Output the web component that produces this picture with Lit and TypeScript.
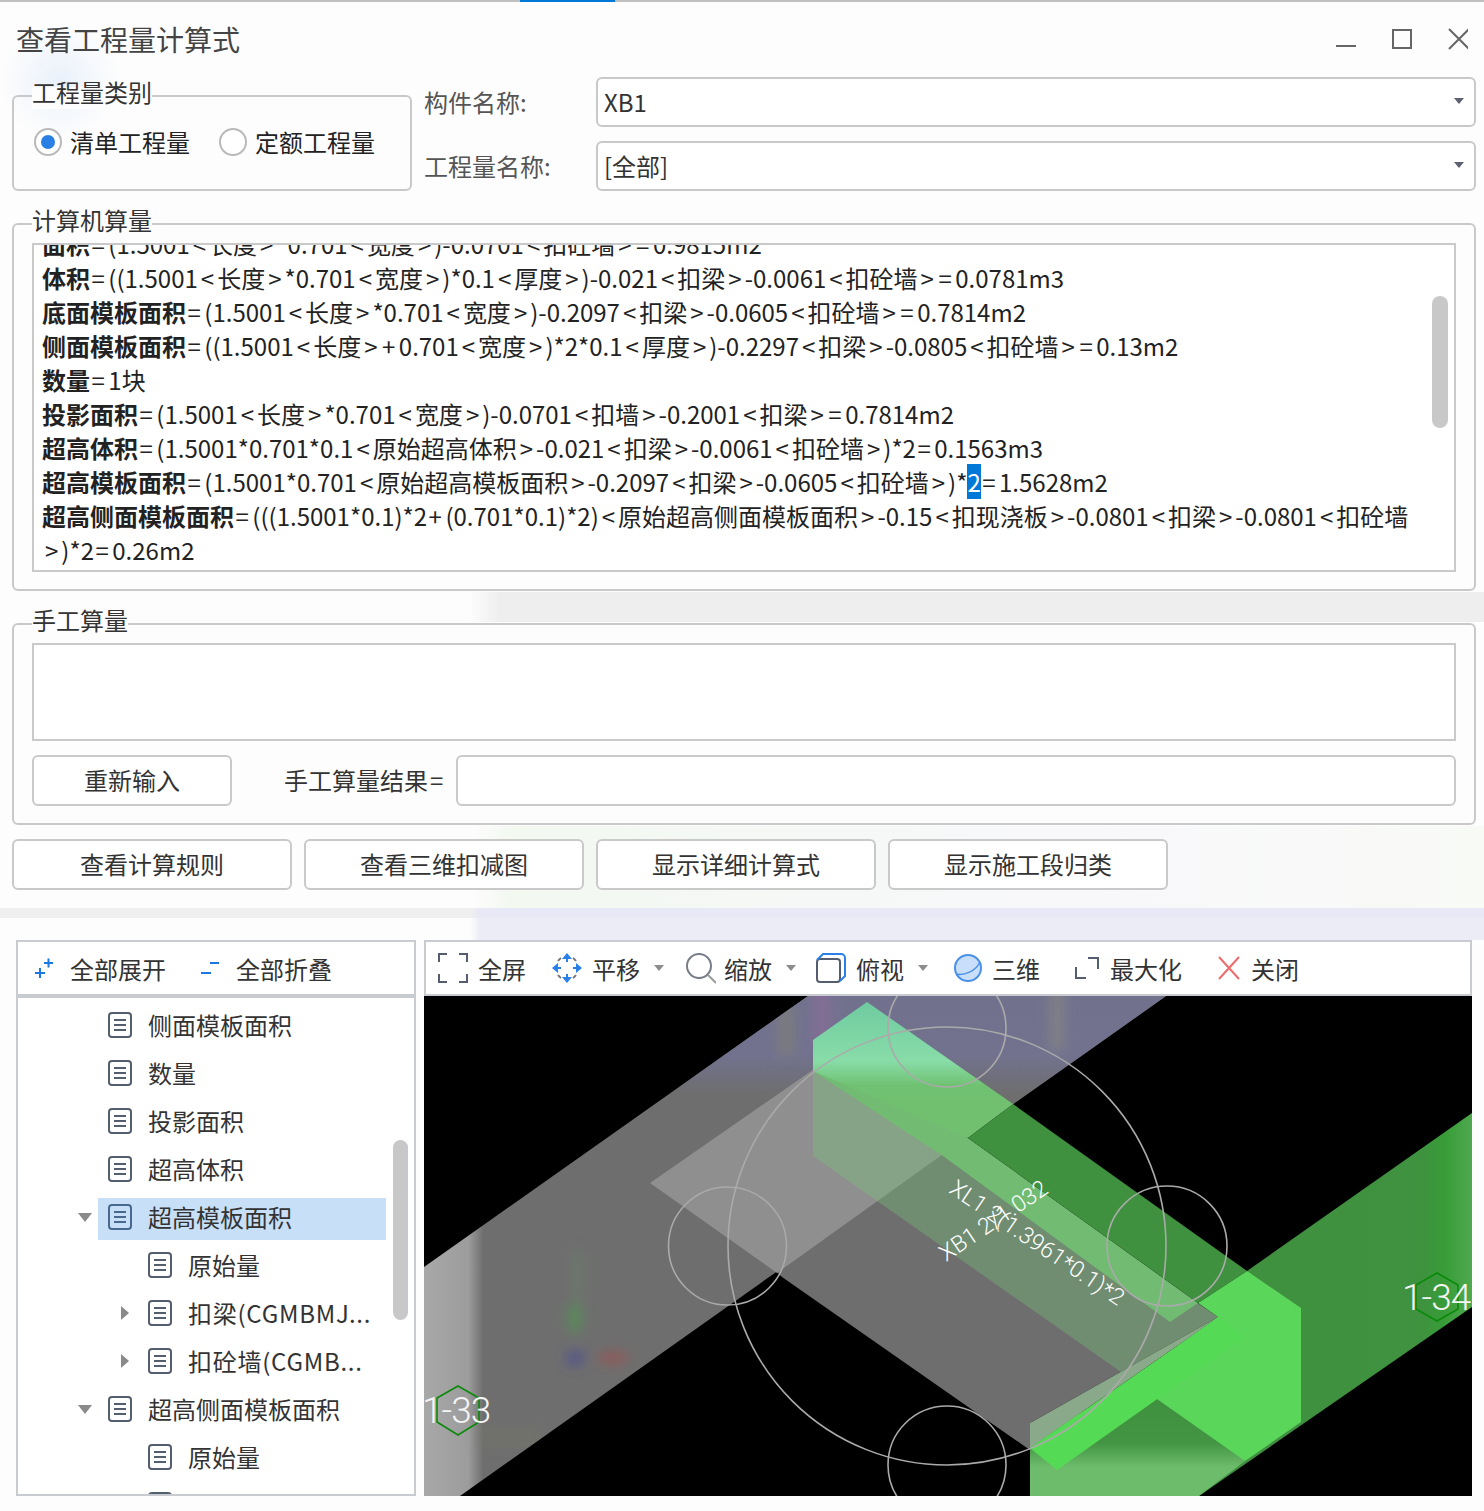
import { LitElement, html, svg, css } from 'lit';
import { customElement } from 'lit/decorators.js';

type TreeRow = {
  text: string;
  level: 1 | 2;
  arrow?: 'down' | 'right';
  selected?: boolean;
  latin?: boolean;
};

const CODE_LINES: [string, string][] = [
  ['面积', '=(1.5001<长度>*0.701<宽度>)-0.0701<扣砼墙>=0.9815m2'],
  ['体积', '=((1.5001<长度>*0.701<宽度>)*0.1<厚度>)-0.021<扣梁>-0.0061<扣砼墙>=0.0781m3'],
  ['底面模板面积', '=(1.5001<长度>*0.701<宽度>)-0.2097<扣梁>-0.0605<扣砼墙>=0.7814m2'],
  ['侧面模板面积', '=((1.5001<长度>+0.701<宽度>)*2*0.1<厚度>)-0.2297<扣梁>-0.0805<扣砼墙>=0.13m2'],
  ['数量', '=1块'],
  ['投影面积', '=(1.5001<长度>*0.701<宽度>)-0.0701<扣墙>-0.2001<扣梁>=0.7814m2'],
  ['超高体积', '=(1.5001*0.701*0.1<原始超高体积>-0.021<扣梁>-0.0061<扣砼墙>)*2=0.1563m3'],
];

const TREE_ROWS: TreeRow[] = [
  { text: '侧面模板面积', level: 1 },
  { text: '数量', level: 1 },
  { text: '投影面积', level: 1 },
  { text: '超高体积', level: 1 },
  { text: '超高模板面积', level: 1, arrow: 'down', selected: true },
  { text: '原始量', level: 2 },
  { text: '扣梁(CGMBMJ...', level: 2, arrow: 'right', latin: true },
  { text: '扣砼墙(CGMB...', level: 2, arrow: 'right', latin: true },
  { text: '超高侧面模板面积', level: 1, arrow: 'down' },
  { text: '原始量', level: 2 },
  { text: '', level: 2 },
];

// wraps brackets and operators so they get the wide spacing of the original font
function expr(text: string) {
  return text.split(/([<>=+])/).map((part) => {
    if (part === '<' || part === '>') return html`<span class="ang">${part}</span>`;
    if (part === '=' || part === '+') return html`<span class="eq">${part}</span>`;
    return part;
  });
}

const docIcon = html`<svg class="doc" width="24" height="26" viewBox="0 0 24 26">
  <rect x="1" y="1" width="22" height="24" rx="3" fill="none" stroke="currentColor" stroke-width="2"></rect>
  <path d="M6 8h12M6 13h12M6 18h12" stroke="currentColor" stroke-width="2"></path>
</svg>`;

const caret = html`<span class="caret"></span>`;

// the 3D view, drawn in page coordinates so the values read off the screenshot stay usable
const sceneShapes = svg`
  <defs>
    <linearGradient id="beamLeft" gradientUnits="userSpaceOnUse" x1="424" y1="0" x2="1166" y2="0">
      <stop offset="0" stop-color="#a8a8a8"></stop>
      <stop offset="0.06" stop-color="#9c9c9c"></stop>
      <stop offset="0.08" stop-color="#6e6e6e"></stop>
      <stop offset="1" stop-color="#6e6e6e"></stop>
    </linearGradient>
    <linearGradient id="beamTop" gradientUnits="userSpaceOnUse" x1="0" y1="996" x2="0" y2="1095">
      <stop offset="0" stop-color="#71718e"></stop>
      <stop offset="0.6" stop-color="#72728f"></stop>
      <stop offset="1" stop-color="#71718e" stop-opacity="0"></stop>
    </linearGradient>
    <linearGradient id="topFace" gradientUnits="userSpaceOnUse" x1="0" y1="1002" x2="0" y2="1100">
      <stop offset="0" stop-color="#6fcba0"></stop>
      <stop offset="0.6" stop-color="#88dca8"></stop>
      <stop offset="0.85" stop-color="#70c272"></stop>
      <stop offset="1" stop-color="#70c070"></stop>
    </linearGradient>
    <linearGradient id="rightBeam" gradientUnits="userSpaceOnUse" x1="1240" y1="0" x2="1472" y2="0">
      <stop offset="0" stop-color="#3f903f"></stop>
      <stop offset="0.78" stop-color="#3f923f"></stop>
      <stop offset="0.88" stop-color="#379c37"></stop>
      <stop offset="1" stop-color="#4fa94f"></stop>
    </linearGradient>
    <linearGradient id="lowerFace" gradientUnits="userSpaceOnUse" x1="0" y1="1400" x2="0" y2="1496">
      <stop offset="0" stop-color="#3f903f"></stop>
      <stop offset="0.45" stop-color="#439443"></stop>
      <stop offset="0.7" stop-color="#6cbc6c"></stop>
      <stop offset="1" stop-color="#6cbc6c"></stop>
    </linearGradient>
    <filter id="soft" x="-50%" y="-50%" width="200%" height="200%">
      <feGaussianBlur stdDeviation="6"></feGaussianBlur>
    </filter>
    <clipPath id="beamClip">
      <polygon points="424,1267 808,996 1166,996 460,1496 424,1496"></polygon>
    </clipPath>
  </defs>
  <rect x="424" y="996" width="1048" height="500" fill="#000"></rect>
  <polygon points="424,1267 808,996 1166,996 460,1496 424,1496" fill="url(#beamLeft)"></polygon>
  <polygon points="424,1267 808,996 1166,996 460,1496 424,1496" fill="url(#beamTop)"></polygon>
  <g clip-path="url(#beamClip)">
    <g filter="url(#soft)" fill-opacity="0.6">
      <rect x="812" y="985" width="20" height="60" fill="#8c6c98"></rect>
      <rect x="778" y="1005" width="16" height="50" fill="#828274"></rect>
      <rect x="1050" y="985" width="14" height="65" fill="#8a8a80"></rect>
      <rect x="572" y="1250" width="12" height="50" fill="#6c7c6c"></rect>
      <ellipse cx="575" cy="1318" rx="8" ry="16" fill="#4f9a4f"></ellipse>
      <rect x="566" y="1350" width="18" height="16" fill="#4c4c96"></rect>
      <ellipse cx="613" cy="1358" rx="16" ry="7" fill="#a05050"></ellipse>
      <rect x="480" y="1430" width="60" height="16" fill="#74746a"></rect>
    </g>
  </g>
  <polygon points="782,1277 1030,1450 1030,1423 1218,1317 900,1100 700,1200" fill="#6e6e6e"></polygon>
  <polygon points="650,1183 840,1051 1013,1104 777,1273" fill="#8f8f8f"></polygon>
  <polygon points="813,1040 813,1156 1121,1372 1218,1317" fill="#78c878" fill-opacity="0.35"></polygon>
  <polygon points="813,1042 968,1138 1198,1303 1170,1322 943,1156 813,1071" fill="#72bb72"></polygon>
  <polygon points="867,1002 813,1040 813,1071 968,1138 1013,1104" fill="url(#topFace)"></polygon>
  <polygon points="1013,1104 968,1138 1198,1303 1247,1271" fill="#3f903f"></polygon>
  <polygon points="1472,1113 1247,1271 1199,1496 1472,1307" fill="url(#rightBeam)"></polygon>
  <polygon points="1030,1440 1160,1370 1245,1461 1199,1496 1030,1496" fill="url(#lowerFace)"></polygon>
  <polygon points="1247,1271 1301,1308 1301,1422 1245,1461 1130,1380 1218,1317 1198,1303" fill="#5ad65a"></polygon>
  <polygon points="1030,1423 1218,1317 1190,1337 1030,1448" fill="#8aa88a"></polygon>
  <polygon points="1030,1448 1190,1337 1218,1317 1245,1337 1057,1470" fill="#55da55"></polygon>
  <g fill="none" stroke="#aaa" stroke-width="1.6">
    <circle cx="947" cy="1246" r="219"></circle>
    <circle cx="727.5" cy="1246" r="59"></circle>
    <circle cx="947" cy="1028" r="59"></circle>
    <circle cx="1167" cy="1246" r="60"></circle>
    <circle cx="947" cy="1465" r="59"></circle>
  </g>
  <g class="dim">
    <text transform="translate(948 1192) rotate(34)">XL1 2(1.3961*0.1)*2</text>
    <text transform="translate(946 1262) rotate(-34)">XB1 2/1.032</text>
  </g>
  <g fill="none" stroke="#0a8a0a" stroke-width="1.6">
    <polygon points="458,1386 479,1398 479,1422 458,1435 437,1422 437,1398"></polygon>
    <polygon points="1437,1273 1458,1285 1458,1309 1437,1321 1416,1309 1416,1285"></polygon>
  </g>
  <text class="axis" x="422" y="1423">1-33</text>
  <text class="axis" x="1402" y="1310">1-34</text>
`;

@customElement('app-root')
export class AppRoot extends LitElement {
  static styles = css`
    :host {
      display: block;
      width: 1484px;
      height: 1511px;
      overflow: hidden;
      font-family: "Noto Sans CJK SC", "Liberation Sans", sans-serif;
      font-size: 24px;
      color: #333;
      background-color: #fdfdfd;
      background-repeat: no-repeat;
      background-image:
        linear-gradient(90deg, rgba(240,240,240,0), #eeeeee 30px),
        linear-gradient(90deg, rgba(240,248,236,0), #f3f8f1 40px, #f8f8fb 60%, #f8faf6),
        radial-gradient(ellipse at center, rgba(226,236,250,0.7), rgba(226,236,250,0) 70%);
      background-size: 1014px 30px, 1014px 82px, 120px 120px;
      background-position: 470px 592px, 470px 826px, 0 20px;
    }

    .topline {
      height: 2px;
      background: #c0c0c0;
    }
    .topline div {
      width: 95px;
      height: 2px;
      margin-left: 520px;
      background: #0078d7;
    }

    .titlebar {
      height: 75px;
      padding: 0 16px;
      display: flex;
      align-items: center;
      justify-content: space-between;
    }
    .titlebar h1 {
      margin: -1px 0 0;
      font-size: 28px;
      font-weight: 400;
      line-height: 76px;
      color: #444;
    }
    .titlebar svg {
      display: block;
      margin-top: -2px;
    }

    .top {
      display: flex;
      height: 114px;
      margin: 0 8px 0 12px;
    }
    .group {
      position: relative;
      box-sizing: border-box;
      border: 2px solid #c9c9c9;
      border-radius: 6px;
    }
    .legend {
      position: absolute;
      left: 18px;
      top: -22px;
      line-height: 34px;
      background: linear-gradient(transparent 12px, #fdfdfd 12px);
      white-space: nowrap;
    }

    .kind {
      width: 400px;
      height: 96px;
      margin-top: 18px;
      padding: 31px 0 0 20px;
      display: flex;
      align-items: flex-start;
    }
    .radio {
      display: flex;
      align-items: center;
      line-height: 28px;
      margin-right: 29px;
      color: #222;
    }
    .dot {
      box-sizing: border-box;
      width: 28px;
      height: 28px;
      margin-right: 8px;
      border: 2px solid #b9b9b9;
      border-radius: 50%;
      display: flex;
      align-items: center;
      justify-content: center;
      background: #fff;
    }
    .dot.on::after {
      content: "";
      width: 14px;
      height: 14px;
      border-radius: 50%;
      background: #2a7fe4;
    }

    .fields {
      flex: 1;
      margin-left: 12px;
      display: flex;
      flex-direction: column;
      gap: 14px;
    }
    .field {
      display: flex;
      align-items: center;
      height: 50px;
    }
    .field label {
      width: 172px;
      padding-bottom: 2px;
      color: #555;
    }
    .select {
      box-sizing: border-box;
      flex: 1;
      height: 50px;
      padding: 0 10px 2px 6px;
      border: 2px solid #c9c9c9;
      border-radius: 6px;
      display: flex;
      align-items: center;
      justify-content: space-between;
      background: #fff;
    }
    .select i {
      width: 0;
      height: 0;
      border-left: 5px solid transparent;
      border-right: 5px solid transparent;
      border-top: 6px solid #5c6070;
    }

    .computed {
      height: 368px;
      margin: 32px 8px 0 12px;
      padding: 18px 18px 17px;
    }
    .code {
      position: relative;
      box-sizing: border-box;
      height: 329px;
      padding-left: 8px;
      border: 2px solid #c9c9c9;
      overflow: hidden;
      background: #fff;
      color: #222;
      line-height: 34px;
    }
    .lines {
      margin-top: -18px;
    }
    .line {
      white-space: nowrap;
    }
    .line b {
      font-weight: 700;
    }
    .ang {
      margin: 0 3px;
    }
    .eq {
      margin: 0 3.500px 0 1.500px;
    }
    .sel {
      background: #0078d7;
      color: #fff;
    }
    .code .thumb {
      position: absolute;
      right: 6px;
      top: 51px;
      width: 16px;
      height: 132px;
      border-radius: 8px;
      background: #c8c8c8;
    }

    .manual {
      height: 202px;
      margin: 32px 8px 0 12px;
      padding: 18px 18px 0;
    }
    .memo {
      box-sizing: border-box;
      height: 98px;
      border: 2px solid #c9c9c9;
      background: #fff;
    }
    .manual-row {
      display: flex;
      align-items: center;
      margin-top: 14px;
    }
    .manual-row .btn {
      width: 200px;
      margin-right: 52px;
    }
    .manual-row span.label {
      width: 172px;
      padding-bottom: 2px;
      white-space: nowrap;
    }
    .manual-row .eq {
      margin: 0 0 0 2px;
    }
    .result {
      box-sizing: border-box;
      flex: 1;
      height: 51px;
      border: 2px solid #c9c9c9;
      border-radius: 6px;
      background: #fff;
    }
    .btn {
      box-sizing: border-box;
      height: 51px;
      padding-bottom: 2px;
      border: 2px solid #c9c9c9;
      border-radius: 6px;
      display: flex;
      align-items: center;
      justify-content: center;
      background: #fff;
      white-space: nowrap;
    }
    .actions {
      display: flex;
      gap: 12px;
      margin: 14px 0 0 12px;
    }
    .actions .btn {
      width: 280px;
    }

    .splitter {
      height: 10px;
      margin-top: 18px;
      background: linear-gradient(90deg, #efefef 470px, #e8e8f6 480px);
    }

    .lower {
      display: flex;
      gap: 8px;
      height: 556px;
      padding: 22px 12px 0 16px;
      background: linear-gradient(90deg, #fdfdfd 470px, #ececf7 480px) 0 0 / 100% 22px no-repeat;
    }
    .tree {
      box-sizing: border-box;
      position: relative;
      width: 400px;
      border: 2px solid #c8ccd0;
      background: #fff;
      overflow: hidden;
    }
    .tree-head {
      box-sizing: border-box;
      height: 56px;
      padding-left: 16px;
      border-bottom: 4px solid #c8ccd0;
      display: flex;
      align-items: center;
    }
    .tree-head svg {
      display: block;
      margin-right: 16px;
    }
    .tree-head span {
      margin-right: 34px;
    }
    .tree-body {
      padding-top: 5px;
    }
    .item {
      display: flex;
      align-items: center;
      height: 48px;
      padding-left: 58px;
    }
    .slot {
      width: 18px;
      margin-right: 4px;
      margin-bottom: 3px;
      display: flex;
      justify-content: center;
      flex: none;
    }
    .row {
      width: 288px;
      height: 42px;
      padding: 0 0 4px 10px;
      box-sizing: border-box;
      display: flex;
      align-items: center;
      color: #555e6e;
      flex: none;
    }
    .row.l2 {
      padding-left: 18px;
    }
    .row .slot {
      margin-right: 14px;
      margin-bottom: 0;
    }
    .row.sel-row {
      background: #c8dff8;
      color: #48688e;
    }
    .row span {
      margin: 0 0 0 16px;
      padding-bottom: 2px;
      color: #333;
      white-space: nowrap;
    }
    .row span.latin {
      letter-spacing: 0.750px;
    }
    .doc {
      display: block;
      flex: none;
    }
    .down {
      width: 0;
      height: 0;
      border-left: 7px solid transparent;
      border-right: 7px solid transparent;
      border-top: 9px solid #8a8a8a;
    }
    .right {
      width: 0;
      height: 0;
      border-top: 7px solid transparent;
      border-bottom: 7px solid transparent;
      border-left: 8px solid #8a8a8a;
    }
    .tree .thumb {
      position: absolute;
      left: 375px;
      top: 198px;
      width: 15px;
      height: 180px;
      border-radius: 8px;
      background: #c8c8c8;
    }

    .viewer {
      width: 1048px;
      display: flex;
      flex-direction: column;
    }
    .toolbar {
      box-sizing: border-box;
      height: 56px;
      border: 2px solid #c8ccd0;
      background: #fff;
      display: flex;
      align-items: center;
      padding-left: 12px;
    }
    .tool {
      display: flex;
      align-items: center;
      white-space: nowrap;
    }
    .tool svg {
      display: block;
      margin-right: 10px;
    }
    .tool.full { width: 114px; }
    .tool.pan { width: 134px; }
    .tool.zoom { width: 130px; }
    .tool.zoom svg { margin-right: 8px; }
    .tool.view { width: 138px; }
    .tool.three { width: 120px; }
    .tool.max { width: 143px; }
    .caret {
      width: 0;
      height: 0;
      margin-left: 14px;
      border-left: 5px solid transparent;
      border-right: 5px solid transparent;
      border-top: 6px solid #8c8c8c;
    }
    .scene {
      display: block;
      width: 1048px;
      height: 500px;
    }
    .scene .dim text {
      font: 300 23px Roboto, "Liberation Sans", sans-serif;
      fill: #fff;
    }
    .scene .axis {
      font: 300 37px Roboto, "Liberation Sans", sans-serif;
      letter-spacing: -1px;
      fill: #f4f4f4;
    }
  `;

  private renderTitlebar() {
    return html`
      <div class="titlebar">
        <h1>查看工程量计算式</h1>
        <svg width="136" height="24" viewBox="0 0 136 24">
          <path d="M4 19h20" stroke="#666" stroke-width="2"></path>
          <rect x="61" y="3" width="18" height="18" fill="none" stroke="#666" stroke-width="2"></rect>
          <path d="M117 2l20 20M137 2l-20 20" stroke="#666" stroke-width="2" fill="none"></path>
        </svg>
      </div>
    `;
  }

  private renderTop() {
    return html`
      <div class="top">
        <div class="group kind">
          <div class="legend">工程量类别</div>
          <div class="radio"><div class="dot on"></div>清单工程量</div>
          <div class="radio"><div class="dot"></div>定额工程量</div>
        </div>
        <div class="fields">
          <div class="field">
            <label>构件名称:</label>
            <div class="select">XB1<i></i></div>
          </div>
          <div class="field">
            <label>工程量名称:</label>
            <div class="select">[全部]<i></i></div>
          </div>
        </div>
      </div>
    `;
  }

  private renderComputed() {
    return html`
      <div class="group computed">
        <div class="legend">计算机算量</div>
        <div class="code">
          <div class="lines">
            ${CODE_LINES.map(([label, rest]) => html`<div class="line"><b>${label}</b>${expr(rest)}</div>`)}
            <div class="line">
              <b>超高模板面积</b>${expr('=(1.5001*0.701<原始超高模板面积>-0.2097<扣梁>-0.0605<扣砼墙>)*')}<span class="sel">2</span>${expr('=1.5628m2')}
            </div>
            <div class="line">
              <b>超高侧面模板面积</b>${expr('=(((1.5001*0.1)*2+(0.701*0.1)*2)<原始超高侧面模板面积>-0.15<扣现浇板>-0.0801<扣梁>-0.0801<扣砼墙')}
            </div>
            <div class="line">${expr('>)*2=0.26m2')}</div>
          </div>
          <div class="thumb"></div>
        </div>
      </div>
    `;
  }

  private renderManual() {
    return html`
      <div class="group manual">
        <div class="legend">手工算量</div>
        <div class="memo"></div>
        <div class="manual-row">
          <div class="btn">重新输入</div>
          <span class="label">手工算量结果<span class="eq">=</span></span>
          <div class="result"></div>
        </div>
      </div>
      <div class="actions">
        <div class="btn">查看计算规则</div>
        <div class="btn">查看三维扣减图</div>
        <div class="btn">显示详细计算式</div>
        <div class="btn">显示施工段归类</div>
      </div>
      <div class="splitter"></div>
    `;
  }

  private renderTree() {
    return html`
      <div class="tree">
        <div class="tree-head">
          <svg width="20" height="24" viewBox="0 0 20 24">
            <path d="M1 17h10M6 12v10M10 7h9M14.500 2.500v9" stroke="#1a78e0" stroke-width="2" fill="none"></path>
          </svg>
          <span>全部展开</span>
          <svg width="20" height="24" viewBox="0 0 20 24">
            <path d="M1 17h10M10 7h9" stroke="#1a78e0" stroke-width="2" fill="none"></path>
          </svg>
          <span>全部折叠</span>
        </div>
        <div class="tree-body">
          ${TREE_ROWS.map((row) => this.renderRow(row))}
        </div>
        <div class="thumb"></div>
      </div>
    `;
  }

  private renderRow(row: TreeRow) {
    const arrow = row.arrow ? html`<i class=${row.arrow}></i>` : '';
    return html`
      <div class="item">
        <div class="slot">${row.level === 1 ? arrow : ''}</div>
        <div class="row ${row.level === 2 ? 'l2' : ''} ${row.selected ? 'sel-row' : ''}">
          ${row.level === 2 ? html`<div class="slot">${arrow}</div>` : ''}
          ${docIcon}
          <span class=${row.latin ? 'latin' : ''}>${row.text}</span>
        </div>
      </div>
    `;
  }

  private renderToolbar() {
    return html`
      <div class="toolbar">
        <div class="tool full">
          <svg width="30" height="30" viewBox="0 0 30 30">
            <path d="M1 9V1h8M21 1h8v8M29 21v8h-8M9 29H1v-8" fill="none" stroke="#555e6e" stroke-width="2"></path>
          </svg>全屏
        </div>
        <div class="tool pan">
          <svg width="30" height="30" viewBox="0 0 30 30">
            <path d="M15 0l-5 6h10zM15 30l-5-6h10zM0 15l6-5v10zM30 15l-6-5v10z" fill="#2a7fe8"></path>
            <path d="M15 6v3M15 21v3M6 15h3M21 15h3" stroke="#2a7fe8" stroke-width="2"></path>
            <path d="M6 8a12 12 0 0 1 3-3M21 5a12 12 0 0 1 3 3M24 22a12 12 0 0 1-3 3M9 25a12 12 0 0 1-3-3" fill="none" stroke="#777" stroke-width="2"></path>
          </svg>平移${caret}
        </div>
        <div class="tool zoom">
          <svg width="30" height="32" viewBox="0 0 30 32">
            <circle cx="13" cy="14" r="12" fill="none" stroke="#777d88" stroke-width="2"></circle>
            <path d="M22 23l8 8" stroke="#9a9a9a" stroke-width="2"></path>
          </svg>缩放${caret}
        </div>
        <div class="tool view">
          <svg width="30" height="30" viewBox="0 0 30 30">
            <rect x="1" y="6" width="23" height="23" rx="3" fill="none" stroke="#555e6e" stroke-width="2"></rect>
            <path d="M1 7l6-6h18a4 4 0 0 1 4 4v18l-5 5" fill="none" stroke="#2a7fe8" stroke-width="2"></path>
          </svg>俯视${caret}
        </div>
        <div class="tool three">
          <svg width="28" height="28" viewBox="0 0 28 28">
            <circle cx="14" cy="14" r="13" fill="#c9def9" stroke="#4a90e8" stroke-width="2"></circle>
            <path d="M2 20c8 2 20-3 24-12" fill="none" stroke="#4a90e8" stroke-width="1.500"></path>
          </svg>三维
        </div>
        <div class="tool max">
          <svg width="26" height="24" viewBox="0 0 26 24">
            <path d="M2 11v11h10M14 2h10v11" fill="none" stroke="#555e6e" stroke-width="2"></path>
          </svg>最大化
        </div>
        <div class="tool">
          <svg width="24" height="24" viewBox="0 0 24 24">
            <path d="M2 1l20 22M22 1L2 23" fill="none" stroke="#f06a6a" stroke-width="2"></path>
          </svg>关闭
        </div>
      </div>
    `;
  }

  render() {
    return html`
      <div class="topline"><div></div></div>
      ${this.renderTitlebar()}
      ${this.renderTop()}
      ${this.renderComputed()}
      ${this.renderManual()}
      <div class="lower">
        ${this.renderTree()}
        <div class="viewer">
          ${this.renderToolbar()}
          <svg class="scene" viewBox="424 996 1048 500">${sceneShapes}</svg>
        </div>
      </div>
    `;
  }
}
